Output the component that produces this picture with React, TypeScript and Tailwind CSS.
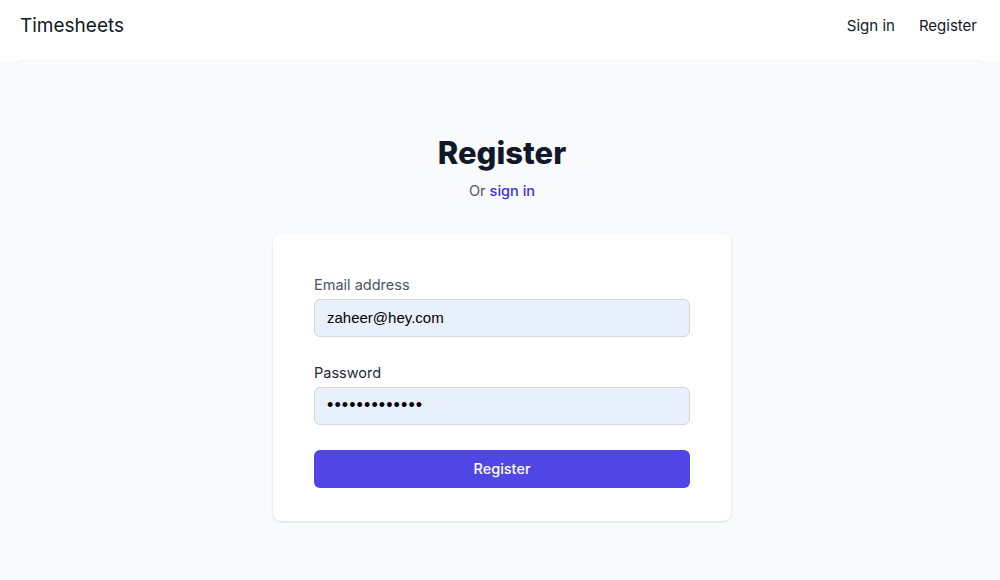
import React from 'react';

const font = { fontFamily: 'Inter, "Noto Sans", sans-serif' };

export default function App() {
    return (
        <div className="min-h-screen flex flex-col bg-[#f9fafb]" style={font}>
            {/* Top bar */}
            <header className="bg-white px-5">
                <div className="h-[61px] flex items-start justify-between pt-[14px] border-b border-gray-100">
                    <span className="text-[19px] leading-6 text-[#111827]">Timesheets</span>
                    <nav className="flex items-center gap-6 mr-[3px] text-[15px] leading-6 text-[#111827]">
                        <a href="#">Sign in</a>
                        <a href="#">Register</a>
                    </nav>
                </div>
            </header>

            {/* Form */}
            <main className="flex-1 flex flex-col items-center pt-[74px] pl-1">
                <h1 className="text-[31px] leading-9 font-extrabold text-[#111827]">Register</h1>
                <p className="mt-[9px] text-[14.5px] text-[#4b5563]">
                    Or <a href="#" className="font-medium text-[#3b2ee8]">sign in</a>
                </p>

                <div className="mt-8 w-[458px] bg-white rounded-lg shadow px-[41px] pt-[41px] pb-[33px]">
                    <label className="block text-[14.5px] text-[#4b5563] leading-5">Email address</label>
                    <input
                        type="email"
                        defaultValue="zaheer@hey.com"
                        className="mt-1 block w-full h-[38px] px-3 rounded-md border border-[#d1d5db] bg-[#e8f0fe] text-[15px] text-black outline-none"
                        style={{ fontFamily: '"Liberation Sans", Arial, sans-serif' }}
                    />

                    <label className="block mt-[26px] text-[14.5px] text-[#1f2937] leading-5">Password</label>
                    <input
                        type="password"
                        defaultValue="zaheerpasswd1"
                        className="mt-1 block w-full h-[38px] px-3 rounded-md border border-[#d1d5db] bg-[#e8f0fe] text-[18px] text-black outline-none tracking-[1.1px]"
                        style={{ fontFamily: '"Liberation Sans", Arial, sans-serif' }}
                    />

                    <button className="mt-[25px] w-full h-[38px] rounded-md bg-[#4f46e5] text-white text-[14.5px] font-medium">
                        Register
                    </button>
                </div>
            </main>
        </div>
    );
}
